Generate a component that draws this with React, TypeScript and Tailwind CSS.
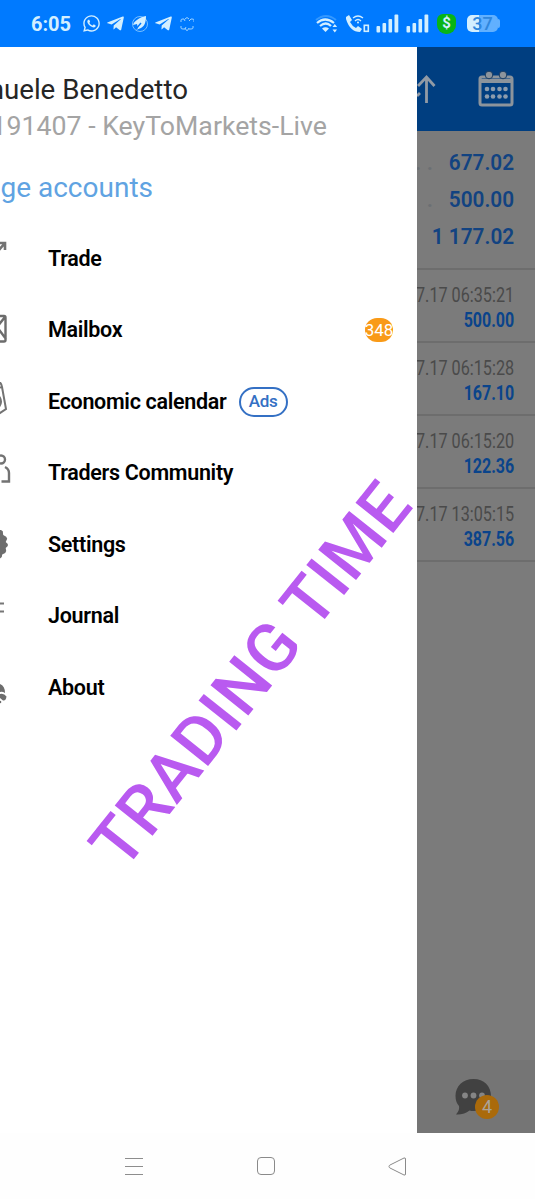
import React from "react";
import { FaTelegramPlane, FaWhatsapp } from "react-icons/fa";

function StatusBar() {
  return (
    <header className="flex h-[47px] shrink-0 items-center bg-[#007aff] text-[#d3efff]">
      <span className="ml-[31px] w-[40px] text-[20px] leading-6 font-bold">6:05</span>
      <FaWhatsapp className="ml-[11px] size-[19px]" />
      <FaTelegramPlane className="ml-[5px] size-[19px]" />
      <svg className="ml-[6px] size-[18px]" viewBox="0 0 18 18" fill="none">
        <circle cx="9" cy="9" r="7.5" stroke="#77bfff" strokeWidth="1" />
        <path d="M15 1C9 2 3 6 2 10l4-1 1 4-2 2 5-2c4-2 5-7 5-12Z" fill="currentColor" />
        <path d="m5 14 5-6" stroke="#007aff" strokeWidth="1.4" />
      </svg>
      <FaTelegramPlane className="ml-[5px] size-[19px]" />
      <svg className="ml-[7px] h-[16px] w-[14px]" viewBox="0 0 14 16" fill="none" stroke="#9cd2ff" strokeWidth="1">
        <path d="M1 6V4q0-1 2-1h1l1 2m9 1V4q0-1-2-1h-1L9 5M5 3q2-3 4 0M1 10v2q0 1 2 1h2l1-2m7-1v2q0 1-2 1H9m-4-1q2 5 4 0" />
      </svg>
      <svg className="ml-[121px] h-[20px] w-[24px]" viewBox="0 0 24 20" fill="none" stroke="currentColor">
        <path d="M1 6q10-8 20 0" stroke="#3398ff" strokeWidth="2" />
        <path d="M2 9q8-7 17 0M5 12q6-5 11 0" strokeWidth="2.2" />
        <path d="m7 14.5 3.5 3.5 3.5-3.5q-3.5-2.5-7 0Z" fill="currentColor" stroke="none" />
        <path d="m17.5 13 2.3-3 2.3 3Zm0 2.5 2.3 3 2.3-3Z" fill="currentColor" stroke="none" />
      </svg>
      <svg className="ml-[6px] h-[20px] w-[25px]" viewBox="0 0 25 20" fill="none" stroke="currentColor">
        <path d="m1 3 3-2 3 5-2 2q2 4 6 6l2-2 4 3-2 3Q5 18 1 5Z" fill="currentColor" stroke="none" />
        <path d="M8 4q5-4 10 0m-8 3q3-3 6 0" strokeWidth="1.3" />
        <circle cx="13" cy="8.5" r="1" fill="currentColor" stroke="none" />
        <rect x="19.3" y="11.3" width="4" height="6" strokeWidth="1.6" />
      </svg>
      {["sim1", "sim2"].map((id) => (
        <svg key={id} className="ml-[6px] h-[19px] w-[24px]" viewBox="0 0 24 19" fill="currentColor">
          <rect x="0.5" y="12" width="3.6" height="6.5" rx="1" />
          <rect x="6.5" y="9" width="3.6" height="9.5" rx="1" />
          <rect x="12.5" y="5" width="3.6" height="13.5" rx="1" />
          <rect x="18.5" y="0.5" width="3.8" height="18" rx="1" />
        </svg>
      ))}
      <span className="ml-[7px] grid h-[20px] w-[19px] place-items-center rounded-b-[9px] rounded-t-[6px] bg-[#08b516] text-[15px] leading-none font-bold">$</span>
      <div className="ml-[11px] flex h-[17px] w-[31px] items-center justify-center rounded-[5px] bg-linear-to-r from-[#d3efff] from-40% to-[#61b0ff] to-40% text-[18px] leading-none font-medium text-[#2e86dd]">37</div>
      <span className="h-[9px] w-[2px] rounded-r bg-[#61b0ff]" />
    </header>
  );
}

const icon = "h-[40px] w-[14px] shrink-0";
const menu = [
  {
    label: "Trade",
    icon: (
      <svg className={icon} viewBox="0 0 14 40" fill="none" stroke="#737373" strokeWidth="2.6">
        <path d="M0 4h5v7M5 4-2 12" />
      </svg>
    ),
  },
  {
    label: "Mailbox",
    icon: (
      <svg className={icon} viewBox="0 0 14 40" fill="none" stroke="#6c6c6c" strokeWidth="2.4">
        <path d="M-8 6H4q1.500 0 1.500 1.500v22.500q0 1.500-1.500 1.500H-8M5 7-3 17l9 12" />
      </svg>
    ),
  },
  {
    label: "Economic calendar",
    icon: (
      <svg className={icon} viewBox="0 0 14 40" fill="none" stroke="#737373" strokeWidth="2">
        <path d="M-4-1Q1-1 2 5l4 22-9 6M-2 6l4-1" />
        <path d="M-1 15q3 5 0 9" strokeWidth="3" />
      </svg>
    ),
  },
  {
    label: "Traders Community",
    icon: (
      <svg className={icon} viewBox="0 0 14 40" fill="none" stroke="#737373" strokeWidth="2.4">
        <circle cx="1" cy="6.5" r="4" />
        <path d="M5 14q4 2 4 6v8.500H1.500" />
      </svg>
    ),
  },
  {
    label: "Settings",
    icon: (
      <svg className={icon} viewBox="0 0 14 40" fill="#6d6d6d">
        <path d="M0 5h1l1.800 1.200.4 3.800 3 1.800 1 2-1.500 3.200 2.100 2v2l-2.100 2L6.200 26l-1 2-3 1.500-.4 2.500L0 33.500Z" />
      </svg>
    ),
  },
  {
    label: "Journal",
    icon: (
      <svg className={icon} viewBox="0 0 14 40" fill="none" stroke="#777" strokeWidth="2">
        <path d="M0 7.500h4M0 15.500h4" />
      </svg>
    ),
  },
  {
    label: "About",
    icon: (
      <svg className={icon} viewBox="0 0 14 40" fill="#6d6d6d">
        <path d="M0 16q5 2 5 9-3-2-5-1Z" />
        <path d="M0 26q4-1 6.500 2.500Q6 33 3 32.500L0 30Z" />
        <circle cx="0" cy="34" r="1.300" />
      </svg>
    ),
  },
];

function Drawer() {
  return (
    <aside className="relative flex w-[417px] shrink-0 flex-col overflow-hidden bg-white">
      <div className="flex h-[176px] shrink-0 flex-col items-start pt-[26px] whitespace-nowrap">
        <div className="flex w-[188px] justify-end text-[27.700px] leading-[34px] text-[#262626]">
          <span className="shrink-0">nuele Benedetto</span>
        </div>
        <div className="mt-[2px] flex w-[327px] justify-end text-[26.700px] leading-[34px] text-[#a4a4a4]">
          <span className="shrink-0">191407 - KeyToMarkets-Live</span>
        </div>
        <div className="mt-[28px] flex w-[153px] justify-end text-[28px] leading-[34px] text-[#60a3e2]">
          <span className="shrink-0">ge accounts</span>
        </div>
      </div>
      <nav className="flex flex-col">
        {menu.map((item) => (
          <div key={item.label} className="flex h-[71.500px] items-center pr-[24px]">
            {item.icon}
            <span className="ml-[34px] text-[21.500px] leading-6 font-semibold tracking-[-0.3px] text-black">{item.label}</span>
            {item.label === "Mailbox" && (
              <span className="ml-auto flex h-[24px] w-[28px] items-center justify-center rounded-full bg-[#f99a17] text-[17px] leading-none text-white">348</span>
            )}
            {item.label === "Economic calendar" && (
              <span className="ml-[12px] flex h-[30px] w-[49px] items-center justify-center rounded-full border-2 border-[#3470c4] text-[17px] leading-none font-medium tracking-[-0.3px] text-[#3470c4]">Ads</span>
            )}
          </div>
        ))}
      </nav>
      <div className="absolute left-[251px] top-[628px] -translate-x-1/2 -translate-y-1/2">
        <div className="-rotate-[51.500deg] text-[68px] leading-none font-medium tracking-[0.5px] whitespace-nowrap text-[#b95af0]">TRADING TIME</div>
      </div>
    </aside>
  );
}

const deals = [
  { time: "7.17 06:35:21", amount: "500.00" },
  { time: "7.17 06:15:28", amount: "167.10" },
  { time: "7.17 06:15:20", amount: "122.36" },
  { time: "7.17 13:05:15", amount: "387.56" },
];

const totals = [
  { dots: ". .", value: "677.02" },
  { dots: ".", value: "500.00" },
  { dots: "", value: "1 177.02" },
];

function History() {
  return (
    <main className="flex flex-1 flex-col overflow-hidden bg-[#7b7b7b]">
      <div className="flex h-[84px] shrink-0 items-center justify-between bg-[#003e80] pr-[21px]">
        <svg className="h-[30px] w-[20px]" viewBox="0 0 20 30" fill="none" stroke="#919aa5" strokeWidth="2.8">
          <path d="M9.500 29V3M1 12l8.500-9 8 9M0 22l3-3" />
        </svg>
        <svg className="h-[38px] w-[36px]" viewBox="0 0 36 38" fill="none">
          <rect x="2" y="7" width="32" height="28" rx="2" stroke="#8c949c" strokeWidth="3" />
          <path d="M2 9h32v4H2Z" fill="#8c949c" />
          <circle cx="11" cy="5" r="3.800" fill="#8c949c" stroke="#173c64" />
          <circle cx="25" cy="5" r="3.800" fill="#8c949c" stroke="#173c64" />
          <g fill="#8c9cad">
            {[9, 15, 21.5, 27.5].map((x) => (
              <g key={x}>
                <circle cx={x} cy="19" r="2.300" />
                <circle cx={x} cy="26.500" r="2.300" />
              </g>
            ))}
          </g>
        </svg>
      </div>
      <div className="flex h-[139px] shrink-0 flex-col border-b-2 border-[#6d6d6d] pt-[13px] pr-[21px]">
        {totals.map((row) => (
          <div key={row.value} className="flex h-[37.300px] items-center justify-end text-[22px] leading-none font-semibold text-[#124381]">
            <span className="mr-[12px] whitespace-pre text-[#6b6f73]">{row.dots}</span>
            <span className="origin-right scale-x-[0.945] whitespace-nowrap">{row.value}</span>
          </div>
        ))}
      </div>
      {deals.map((deal) => (
        <div key={deal.time} className="flex h-[73px] shrink-0 flex-col items-end border-b-2 border-[#6d6d6d] pt-[13px] pr-[21px] whitespace-nowrap">
          <span className="origin-right scale-x-[0.81] text-[20px] leading-[25px] text-[#4a4a4a]">{deal.time}</span>
          <span className="origin-right scale-x-[0.8] text-[20px] leading-[25px] font-bold text-[#0a448b]">{deal.amount}</span>
        </div>
      ))}
      <footer className="mt-auto flex h-[73px] justify-center bg-[#757575] pt-[18px]">
        <div className="relative h-[42px] w-[42px]">
          <svg className="size-[42px]" viewBox="0 0 42 42">
            <path d="M18.500 1C29 1 36 8 36 18s-7 15-17.500 15q-2 0-4-.5Q9 37 1 36.500 5 32 4 28 .5 24 .5 18C.500 8 8 1 18.500 1Z" fill="#414141" />
            <g fill="#858585">
              <circle cx="10" cy="17.500" r="2.900" />
              <circle cx="18.500" cy="17.500" r="2.900" />
              <circle cx="27" cy="17.500" r="2.900" />
            </g>
          </svg>
          <span className="absolute top-[17px] left-[20px] flex size-[24px] items-center justify-center rounded-full bg-[#aa6a0b] text-[18px] leading-none text-[#aaa49a]">4</span>
        </div>
      </footer>
    </main>
  );
}

function SystemNav() {
  return (
    <div className="flex h-[66px] shrink-0 items-center bg-[#fefefe] pl-[125px]">
      <div className="flex w-[18px] flex-col gap-[7px]">
        <span className="h-px bg-[#8d8d8d]" />
        <span className="h-px bg-[#8d8d8d]" />
        <span className="h-px bg-[#8d8d8d]" />
      </div>
      <span className="ml-[114px] size-[18px] rounded-[4px] border border-[#8a8a8a]" />
      <svg className="ml-[113px] size-[19px]" viewBox="0 0 19 19" fill="none" stroke="#8a8a8a">
        <path d="M1 9.500q0-1 1-1.500L16 1q1.500-.5 1.500 1v15q0 1.500-1.500 1L2 11q-1-.5-1-1.500Z" />
      </svg>
    </div>
  );
}

export default function App() {
  return (
    <div className="flex h-[1199px] w-[535px] flex-col overflow-hidden bg-white font-[Roboto,sans-serif]">
      <StatusBar />
      <div className="flex h-[1086px] shrink-0">
        <Drawer />
        <History />
      </div>
      <SystemNav />
    </div>
  );
}
